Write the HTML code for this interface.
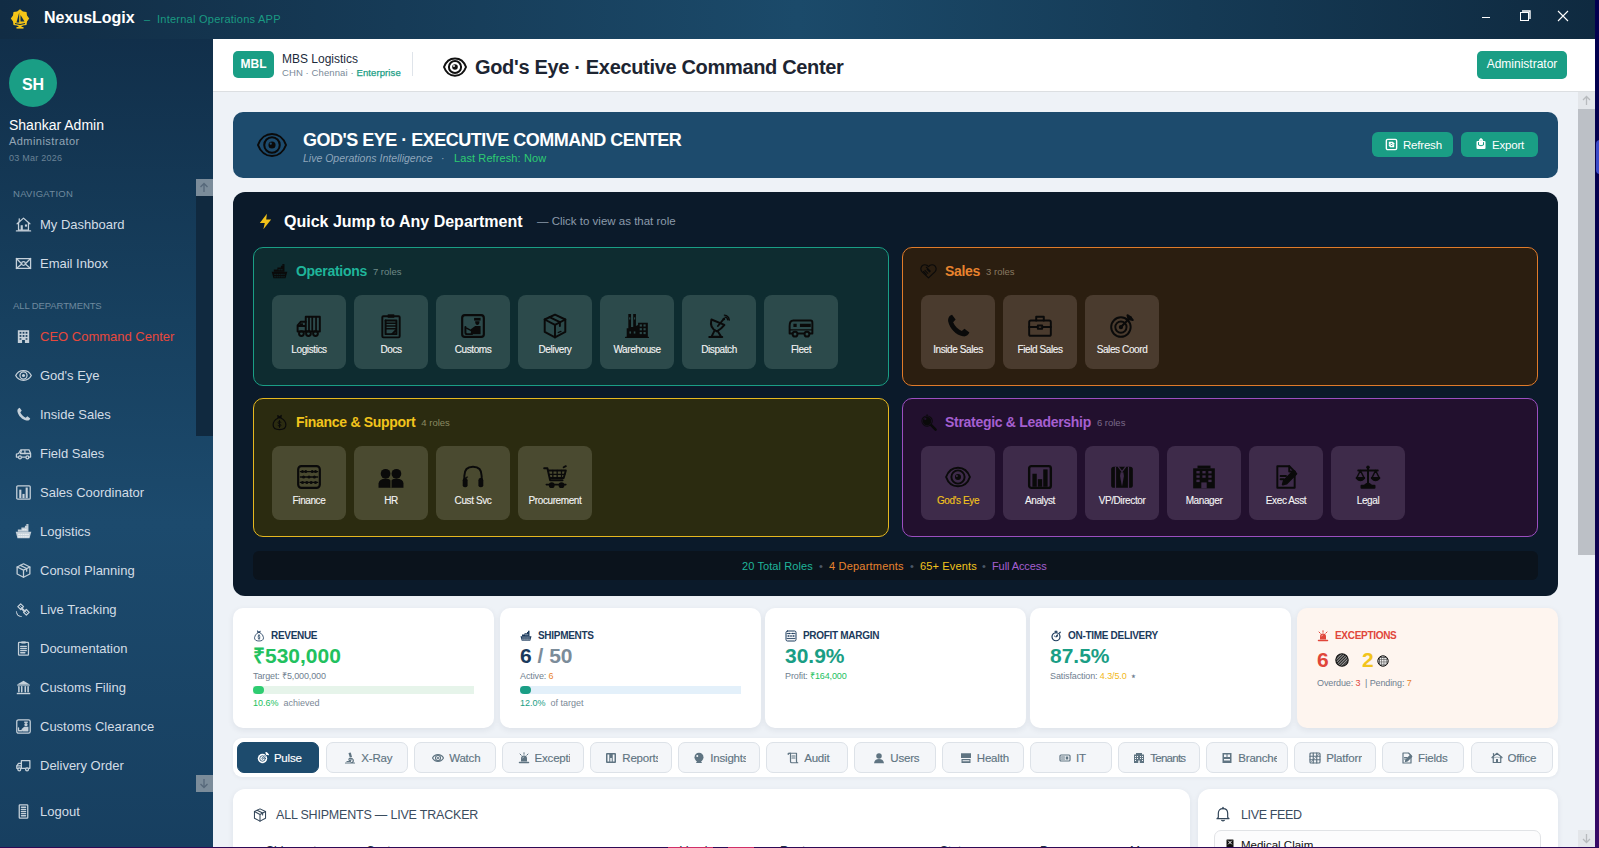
<!DOCTYPE html><html><head><meta charset="utf-8"><style>
*{box-sizing:border-box;margin:0;padding:0}
html,body{width:1599px;height:848px;overflow:hidden;background:#1a0a4a;font-family:"Liberation Sans",sans-serif}
.a{position:absolute}
#titlebar{position:absolute;z-index:5;left:0;top:0;width:1595px;height:39px;background:linear-gradient(90deg,#112c44 0%,#1b4a6a 50%,#0f2a40 100%)}
#sidebar{position:absolute;z-index:4;left:0;top:38px;width:213px;height:809px;background:linear-gradient(180deg,#112f4a 0%,#17405f 35%,#1c4a6d 60%,#173f60 100%);overflow:hidden}
#main{position:absolute;left:212px;top:38px;width:1383px;height:809px;background:#eef2f7;overflow:hidden}
#header{position:absolute;left:0;top:0;width:1383px;height:54px;background:#fff;border-bottom:1px solid #dcdfe2}
.nav{position:absolute;left:40px;font-size:13px;color:#dfe8f0;line-height:18px;white-space:nowrap}
.navi{position:absolute;left:15px}
.sect{position:absolute;left:13px;font-size:9.5px;color:#6f8a9e;letter-spacing:-0.1px;line-height:12px}
.kpi{height:120px;border-radius:10px;background:#fff;box-shadow:0 2px 6px rgba(20,40,60,0.08)}
.klab{position:absolute;left:20px;top:21px;font-size:10px;font-weight:bold;color:#1b3a5c;line-height:13px;white-space:nowrap}
.kic{position:absolute;left:0;top:1px}
.klab .t{margin-left:18px;letter-spacing:-0.3px}
.kval{position:absolute;left:20px;top:36px;font-size:21px;font-weight:bold;line-height:24px;white-space:nowrap}
.ksub{position:absolute;left:20px;top:63px;font-size:9px;letter-spacing:-0.12px;color:#6f8090;line-height:11px;white-space:nowrap}
.tab{width:81.5px;height:30.5px;border-radius:7px;border:1px solid #dde2e8;background:#f4f6f9;color:#5f7482;font-size:11.5px;letter-spacing:-0.2px;line-height:30.5px;-webkit-text-stroke:0.15px currentColor;white-space:nowrap;overflow:hidden}
.tab.act{background:#1d4b6d;border-color:#1d4b6d;color:#fff}
.tab .tic{position:absolute;top:8.5px}
.tab .tn{position:absolute;top:0;overflow:hidden}
.dot1,.dot2{position:absolute;width:13px;height:13px;border-radius:50%;border:1px solid #222;background:#666}
.dot2{background:#ddd;width:12px;height:12px}
.grp{position:absolute;width:636px;height:139px;border-radius:10px;border:1px solid}
.tile{position:absolute;top:47px;width:74px;height:74px;border-radius:8px}
.tile .ti{position:absolute;left:24px;top:18px}
.tile .tl{position:absolute;left:0;top:49px;width:74px;text-align:center;font-size:10px;letter-spacing:-0.4px;line-height:12px;white-space:nowrap;-webkit-text-stroke:0.12px currentColor}
</style></head><body>
<div id="titlebar">
<svg class="a" style="left:10px;top:9px" width="20" height="20" viewBox="0 0 20 20"><polygon points="19.20,9.50 17.02,12.41 16.51,16.01 12.91,16.52 10.00,18.70 7.09,16.52 3.49,16.01 2.98,12.41 0.80,9.50 2.98,6.59 3.49,2.99 7.09,2.48 10.00,0.30 12.91,2.48 16.51,2.99 17.02,6.59" fill="#f5c518"/><path d="M9.2 3.5 L6.5 13.5 L9.2 13.5 Z" fill="#12304a"/><path d="M10.5 6 L14.5 12.5 L10.5 12.5 Z" fill="#12304a"/><path d="M5 14.5 Q10 16.5 15 14.5" stroke="#12304a" stroke-width="1" fill="none"/><rect x="6.5" y="18" width="7" height="1.6" fill="#f5c518"/><rect x="9.3" y="16" width="1.4" height="2.5" fill="#f5c518"/></svg>
<div class="a" style="left:44px;top:9px;font-size:16px;font-weight:bold;color:#fff;line-height:18px">NexusLogix</div>
<div class="a" style="left:144px;top:12px;font-size:11px;letter-spacing:0.25px;color:#1a9a82;line-height:14px;white-space:nowrap">–&nbsp; Internal Operations APP</div>
<div class="a" style="left:1482px;top:17px;width:8px;height:1px;background:#fff"></div>
<svg class="a" style="left:1519px;top:10px" width="12" height="12" viewBox="0 0 12 12"><rect x="1.5" y="2.5" width="8" height="8" fill="none" stroke="#fff" stroke-width="1"/><path d="M3 1 H11 V9" fill="none" stroke="#fff" stroke-width="1.4"/></svg>
<svg class="a" style="left:1557px;top:10px" width="12" height="12" viewBox="0 0 12 12"><path d="M1 1L11 11M11 1L1 11" stroke="#fff" stroke-width="1.1"/></svg>
</div>
<div id="sidebar">
<div class="a" style="left:9px;top:21px;width:48px;height:48px;border-radius:50%;background:#1a9e85;color:#fff;font-weight:bold;font-size:16px;line-height:52px;text-align:center">SH</div>
<div class="a" style="left:9px;top:79px;font-size:14px;color:#fff;line-height:16px;white-space:nowrap">Shankar Admin</div>
<div class="a" style="left:9px;top:97px;font-size:11px;letter-spacing:0.45px;color:#93a6b6;line-height:13px;white-space:nowrap">Administrator</div>
<div class="a" style="left:9px;top:115px;font-size:9px;letter-spacing:0.25px;color:#6a8296;line-height:11px;white-space:nowrap">03 Mar 2026</div>
<div class="a" style="left:196px;top:141px;width:17px;height:17px;background:#7b8c9a"><svg width="16" height="17" viewBox="0 0 16 17" style="display:block"><path d="M8 4.5 V13 M4.5 8 L8 4.5 L11.5 8" stroke="#56687a" stroke-width="1.3" fill="none"/></svg></div>
<div class="a" style="left:196px;top:158px;width:17px;height:240px;background:#10293f"></div>
<div class="a" style="left:196px;top:737px;width:17px;height:17px;background:#7b8c9a"><svg width="16" height="17" viewBox="0 0 16 17" style="display:block"><path d="M8 4 V12.5 M4.5 9 L8 12.5 L11.5 9" stroke="#56687a" stroke-width="1.3" fill="none"/></svg></div>
<div class="sect" style="top:150px;letter-spacing:0.3px">NAVIGATION</div>
<div class="sect" style="top:262px">ALL DEPARTMENTS</div>
<div class="navi" style="top:178px"><svg width="17" height="17" viewBox="0 0 24 24" style="display:block;" fill="none" stroke="#c5d0d9" stroke-width="1.8" stroke-linejoin="round" stroke-linecap="round"><path d="M3 11 L12 3 L21 11"/><path d="M5 9.5 V20 H19 V9.5"/><path d="M2 21 H22"/><rect x="8" y="13" width="3" height="7" fill="#c5d0d9" stroke="none"/><rect x="14" y="12" width="3" height="3" fill="#c5d0d9" stroke="none"/><path d="M6 4 V8"/></svg></div>
<div class="nav" style="top:178px;color:#d3dde6">My Dashboard</div>
<div class="navi" style="top:217px"><svg width="17" height="17" viewBox="0 0 24 24" style="display:block;" fill="none" stroke="#c5d0d9" stroke-width="1.8" stroke-linejoin="round" stroke-linecap="round"><rect x="2" y="5" width="20" height="14"/><path d="M2 5 L9 12 M22 5 L15 12 M2 19 L9 13 M22 19 L15 13"/><circle cx="12" cy="12" r="2.6"/></svg></div>
<div class="nav" style="top:217px;color:#d3dde6">Email Inbox</div>
<div class="navi" style="top:290px"><svg width="17" height="17" viewBox="0 0 24 24" style="display:block;" fill="none" stroke="#c5d0d9" stroke-width="1.8" stroke-linejoin="round" stroke-linecap="round"><path d="M4 3 H20 V21 H14 V17 H10 V21 H4 Z" fill="#c5d0d9" stroke="none"/><g fill="#1a3e5e" stroke="none"><rect x="6.5" y="5.5" width="2.5" height="2.5"/><rect x="10.8" y="5.5" width="2.5" height="2.5"/><rect x="15" y="5.5" width="2.5" height="2.5"/><rect x="6.5" y="10" width="2.5" height="2.5"/><rect x="10.8" y="10" width="2.5" height="2.5"/><rect x="15" y="10" width="2.5" height="2.5"/><rect x="6.5" y="14.5" width="2.5" height="2"/><rect x="15" y="14.5" width="2.5" height="2"/></g></svg></div>
<div class="nav" style="top:290px;color:#e8483c">CEO Command Center</div>
<div class="navi" style="top:329px"><svg width="17" height="17" viewBox="0 0 24 24" style="display:block;" fill="none" stroke="#c5d0d9" stroke-width="1.8" stroke-linejoin="round" stroke-linecap="round"><path d="M1 12 C5.5 3, 18.5 3, 23 12 C18.5 21, 5.5 21, 1 12 Z"/><circle cx="12" cy="12" r="5"/><circle cx="12" cy="12" r="2.2" fill="#c5d0d9" stroke="none"/></svg></div>
<div class="nav" style="top:329px;color:#d3dde6">God's Eye</div>
<div class="navi" style="top:368px"><svg width="17" height="17" viewBox="0 0 24 24" style="display:block;" fill="none" stroke="#c5d0d9" stroke-width="1.8" stroke-linejoin="round" stroke-linecap="round"><path d="M6.5 2.5 C4 3.5 3 5.5 3.5 8 C5 14 10 19 16 20.5 C18.5 21 20.5 20 21.5 17.5 L17.5 14.5 L15 16.5 C12 15 9 12 7.5 9 L9.5 6.5 Z" fill="#c5d0d9" stroke="none"/></svg></div>
<div class="nav" style="top:368px;color:#d3dde6">Inside Sales</div>
<div class="navi" style="top:407px"><svg width="17" height="17" viewBox="0 0 24 24" style="display:block;" fill="none" stroke="#c5d0d9" stroke-width="1.8" stroke-linejoin="round" stroke-linecap="round"><path d="M2 17 V13 L5 12 L8 7 H20 L22 12 V17 Z"/><path d="M9 8 L7.5 12 H21"/><path d="M14 8 V12"/><circle cx="7" cy="17.5" r="2" fill="#1a4465"/><circle cx="17.5" cy="17.5" r="2" fill="#1a4465"/></svg></div>
<div class="nav" style="top:407px;color:#d3dde6">Field Sales</div>
<div class="navi" style="top:446px"><svg width="17" height="17" viewBox="0 0 24 24" style="display:block;" fill="none" stroke="#c5d0d9" stroke-width="1.8" stroke-linejoin="round" stroke-linecap="round"><rect x="2.5" y="2.5" width="19" height="19" rx="1.5"/><rect x="6" y="8" width="3" height="12" fill="#c5d0d9" stroke="none"/><rect x="10.5" y="14" width="3" height="6" fill="#c5d0d9" stroke="none"/><rect x="15" y="5" width="3" height="15" fill="#c5d0d9" stroke="none"/></svg></div>
<div class="nav" style="top:446px;color:#d3dde6">Sales Coordinator</div>
<div class="navi" style="top:485px"><svg width="17" height="17" viewBox="0 0 24 24" style="display:block;" fill="none" stroke="#c5d0d9" stroke-width="1.8" stroke-linejoin="round" stroke-linecap="round"><path d="M1 12.5 H23 L20.5 21.5 H3.5 Z" fill="#c5d0d9" stroke="none"/><path d="M4 12.5 V9 H9 V6.5 H14 V4 H19 V12.5 Z" fill="#c5d0d9" stroke="none"/><path d="M16 1.5 H19 V4 H16 Z" fill="#c5d0d9" stroke="none"/><g stroke="#fff" stroke-width="1.1" stroke-dasharray="1.6 1.6"><path d="M5 16 H19"/><path d="M5 19.5 H19"/><path d="M11 9.5 H17"/></g></svg></div>
<div class="nav" style="top:485px;color:#d3dde6">Logistics</div>
<div class="navi" style="top:524px"><svg width="17" height="17" viewBox="0 0 24 24" style="display:block;" fill="none" stroke="#c5d0d9" stroke-width="1.8" stroke-linejoin="round" stroke-linecap="round"><path d="M12 2.5 L21 7 V17 L12 21.5 L3 17 V7 Z"/><path d="M3 7 L12 11.5 L21 7 M12 11.5 V21.5"/><path d="M7.5 4.8 L16.5 9.2 V13"/></svg></div>
<div class="nav" style="top:524px;color:#d3dde6">Consol Planning</div>
<div class="navi" style="top:563px"><svg width="17" height="17" viewBox="0 0 24 24" style="display:block;" fill="none" stroke="#c5d0d9" stroke-width="1.8" stroke-linejoin="round" stroke-linecap="round"><path d="M8 4 L12 8 L8 12 L4 8 Z"/><path d="M16 12 L20 16 L16 20 L12 16 Z"/><path d="M9.5 10.5 L13.5 14.5" stroke-width="3"/><path d="M6 6 L10 10 M14 14 L18 18" stroke-width="1"/><path d="M3 18 Q3 21 6 21 M2 15 Q2 22 9 22" stroke-width="1.2"/></svg></div>
<div class="nav" style="top:563px;color:#d3dde6">Live Tracking</div>
<div class="navi" style="top:602px"><svg width="17" height="17" viewBox="0 0 24 24" style="display:block;" fill="none" stroke="#c5d0d9" stroke-width="1.8" stroke-linejoin="round" stroke-linecap="round"><rect x="5" y="3.5" width="14" height="18" rx="1"/><rect x="9" y="2" width="6" height="3" fill="#c5d0d9" stroke="none"/><path d="M8 9 H16 M8 12 H16 M8 15 H16 M8 18 H14"/></svg></div>
<div class="nav" style="top:602px;color:#d3dde6">Documentation</div>
<div class="navi" style="top:641px"><svg width="17" height="17" viewBox="0 0 24 24" style="display:block;" fill="none" stroke="#c5d0d9" stroke-width="1.8" stroke-linejoin="round" stroke-linecap="round"><path d="M2.5 8 L12 2.5 L21.5 8 Z" fill="#c5d0d9" stroke="none"/><path d="M3 9 H21 V10 H3 Z" fill="#c5d0d9" stroke="none"/><path d="M5.5 11 V18 M9.5 11 V18 M14.5 11 V18 M18.5 11 V18" stroke-width="2.2"/><path d="M2.5 19.5 H21.5 V21.5 H2.5 Z" fill="#c5d0d9" stroke="none"/></svg></div>
<div class="nav" style="top:641px;color:#d3dde6">Customs Filing</div>
<div class="navi" style="top:680px"><svg width="17" height="17" viewBox="0 0 24 24" style="display:block;" fill="none" stroke="#c5d0d9" stroke-width="1.8" stroke-linejoin="round" stroke-linecap="round"><rect x="2.5" y="2.5" width="19" height="19" rx="2.5"/><path d="M13 5 H18 V7 H13 Z" fill="#c5d0d9" stroke="none"/><circle cx="15.5" cy="9.5" r="2.3" fill="#c5d0d9" stroke="none"/><path d="M9 16 L13 12.5 H19 V19 H11 Z" fill="#c5d0d9" stroke="none"/><path d="M5 14 V18 H10" /></svg></div>
<div class="nav" style="top:680px;color:#d3dde6">Customs Clearance</div>
<div class="navi" style="top:719px"><svg width="17" height="17" viewBox="0 0 24 24" style="display:block;" fill="none" stroke="#c5d0d9" stroke-width="1.8" stroke-linejoin="round" stroke-linecap="round"><path d="M9 5 H21 V16 H9 Z"/><path d="M9 9 H5 L2.5 12.5 V16 H9"/><path d="M3 12.5 H8"/><circle cx="6" cy="17.5" r="2" fill="#1a4465"/><circle cx="17" cy="17.5" r="2" fill="#1a4465"/></svg></div>
<div class="nav" style="top:719px;color:#d3dde6">Delivery Order</div>
<div class="navi" style="top:765px"><svg width="17" height="17" viewBox="0 0 24 24" style="display:block;" fill="none" stroke="#c5d0d9" stroke-width="1.8" stroke-linejoin="round" stroke-linecap="round"><rect x="6" y="2.5" width="12" height="19" rx="1"/><path d="M9 6 H15 M9 9 H15 M9 12 H15 M9 15 H15 M9 18 H15"/></svg></div>
<div class="nav" style="top:765px;color:#d3dde6">Logout</div>
</div>
<div id="main">
<div id="header">
<div class="a" style="left:21px;top:13px;width:41px;height:27px;border-radius:5px;background:#1a9e85;color:#fff;font-weight:bold;font-size:12px;line-height:27px;text-align:center">MBL</div>
<div class="a" style="left:70px;top:14px;font-size:12px;color:#1b2b3b;line-height:14px;white-space:nowrap">MBS Logistics</div>
<div class="a" style="left:70px;top:29px;font-size:9.5px;letter-spacing:0.1px;color:#7a8a99;line-height:11px;white-space:nowrap">CHN · Chennai · <span style="color:#1a9e85;-webkit-text-stroke:0.25px #1a9e85">Enterprise</span></div>
<div class="a" style="left:200px;top:14px;width:1px;height:24px;background:#dfe4ea"></div>
<div class="a" style="left:231px;top:19px"><svg width="24" height="20" viewBox="0 2 24 20" style="display:block;" fill="none" stroke="#111" stroke-width="2" stroke-linejoin="round" stroke-linecap="round"><path d="M1 12 C5 0.5, 19 0.5, 23 12 C19 23.5, 5 23.5, 1 12 Z"/><circle cx="12" cy="12" r="6.1"/><circle cx="12" cy="12" r="2.8" fill="#111" stroke="none"/><circle cx="11" cy="11" r="0.9" fill="#fff" stroke="none"/></svg></div>
<div class="a" style="left:263px;top:17px;font-size:20px;letter-spacing:-0.33px;font-weight:bold;color:#1d2532;line-height:24px;white-space:nowrap">God's Eye · Executive Command Center</div>
<div class="a" style="left:1265px;top:13px;width:90px;height:28px;border-radius:5px;background:#1a9e85;color:#fff;font-size:12px;line-height:27px;text-align:center">Administrator</div>
</div>
<div class="a" style="left:21px;top:74px;width:1325px;height:66px;border-radius:10px;background:#1d4b6d">
<div class="a" style="left:23px;top:19px"><svg width="32" height="28" viewBox="0 1 24 22" style="display:block;" fill="none" stroke="#0a0a0a" stroke-width="1.6" stroke-linejoin="round" stroke-linecap="round"><path d="M1 12 C5 0.5, 19 0.5, 23 12 C19 23.5, 5 23.5, 1 12 Z"/><circle cx="12" cy="12" r="6.1"/><circle cx="12" cy="12" r="2.8" fill="#0a0a0a" stroke="none"/><circle cx="11" cy="11" r="0.9" fill="#1d4b6d" stroke="none"/></svg></div>
<div class="a" style="left:70px;top:17px;font-size:18px;letter-spacing:-0.5px;font-weight:bold;color:#fff;line-height:22px;white-space:nowrap">GOD'S EYE · EXECUTIVE COMMAND CENTER</div>
<div class="a" style="left:70px;top:40px;font-size:10.5px;color:#8fa6bb;line-height:13px;white-space:nowrap"><i>Live Operations Intelligence</i></div>
<div class="a" style="left:208px;top:40px;font-size:10.5px;color:#8fa6bb;line-height:13px">·</div>
<div class="a" style="left:221px;top:40px;font-size:11px;letter-spacing:0.1px;color:#2ecc71;line-height:13px;white-space:nowrap">Last Refresh: Now</div>
<div class="a" style="left:1139px;top:20px;width:81px;height:25px;border-radius:6px;background:#1a9e85;color:#fff;font-size:11.5px;letter-spacing:-0.2px;line-height:27px;white-space:nowrap"><span class="a" style="left:13px;top:6px"><svg width="13" height="13" viewBox="0 0 24 24" style="display:block;" fill="none" stroke="#fff" stroke-width="1.8" stroke-linejoin="round" stroke-linecap="round"><rect x="2.5" y="2.5" width="19" height="19" rx="2.5" stroke-width="2.6"/><path d="M7 7 H14.5 L17 9.5 V17 H9.5 L7 14.5 Z" fill="#fff" stroke="none"/><path d="M9.5 11.5 Q10.5 9.5 12.5 9.8 M14.5 12.5 Q13.5 14.5 11.5 14.2" stroke="#1a9e85" stroke-width="1.6"/></svg></span><span class="a" style="left:31px">Refresh</span></div>
<div class="a" style="left:1228px;top:20px;width:77px;height:25px;border-radius:6px;background:#1a9e85;color:#fff;font-size:11.5px;letter-spacing:-0.2px;line-height:27px;white-space:nowrap"><span class="a" style="left:14px;top:6px"><svg width="12" height="12" viewBox="0 0 24 24" style="display:block;" fill="none" stroke="#fff" stroke-width="1.8" stroke-linejoin="round" stroke-linecap="round"><path d="M3 8 Q3 6 5 6 H19 Q21 6 21 8 V20 Q21 22 19 22 H5 Q3 22 3 20 Z" fill="#fff" stroke="none"/><path d="M7 9 V14 Q12 17 17 14 V9" stroke="#1a9e85" stroke-width="2"/><path d="M12 1.5 V11 M9 4.5 L12 1.5 L15 4.5" stroke-width="2.4"/></svg></span><span class="a" style="left:31px">Export</span></div>
</div>
<div class="a" style="left:21px;top:154px;width:1325px;height:404px;border-radius:12px;background:#0b1a2a">
<div class="a" style="left:24px;top:20px"><svg width="17" height="19" viewBox="0 0 24 24" style="display:block;" fill="none" stroke="#f2c21a" stroke-width="1.8" stroke-linejoin="round" stroke-linecap="round"><path d="M14 1 L4 14 H11 L9 23 L20 9 H13 Z" fill="#f2c21a" stroke="none"/></svg></div>
<div class="a" style="left:51px;top:20px;font-size:16px;font-weight:bold;color:#fff;line-height:19px;white-space:nowrap">Quick Jump to Any Department</div>
<div class="a" style="left:304px;top:22px;font-size:11.5px;color:#8b9aab;line-height:14px;white-space:nowrap">— Click to view as that role</div>
<div class="grp" style="left:20px;top:55px;border-color:#1a9e85;background:#0e2c30"><div class="a" style="left:17px;top:15px"><svg width="17" height="17" viewBox="0 0 24 24" style="display:block;" fill="none" stroke="#0a0a0a" stroke-width="1.8" stroke-linejoin="round" stroke-linecap="round"><path d="M1 12.5 H23 L20.5 21.5 H3.5 Z" fill="#0a0a0a" stroke="none"/><path d="M4 12.5 V9 H9 V6.5 H14 V4 H19 V12.5 Z" fill="#0a0a0a" stroke="none"/><path d="M16 1.5 H19 V4 H16 Z" fill="#0a0a0a" stroke="none"/><g stroke="#0e2c30" stroke-width="1.1" stroke-dasharray="1.6 1.6"><path d="M5 16 H19"/><path d="M5 19.5 H19"/><path d="M11 9.5 H17"/></g></svg></div><div class="a" style="left:42px;top:15px;font-size:14px;letter-spacing:-0.3px;font-weight:bold;color:#1fb59a;line-height:17px;white-space:nowrap">Operations<span style="font-size:9.5px;letter-spacing:0;font-weight:normal;color:#6e8a87;vertical-align:1px;margin-left:6px">7 roles</span></div><div class="tile" style="left:18px;background:#2c4a4b"><div class="ti"><svg width="26" height="26" viewBox="0 0 24 24" style="display:block;" fill="none" stroke="#0a0a0a" stroke-width="1.8" stroke-linejoin="round" stroke-linecap="round"><path d="M9 3.5 H22 V17 H9 Z"/><path d="M12 4 V16.5 M15 4 V16.5 M18.5 4 V16.5" stroke-width="1.6"/><path d="M9 8 H4.5 L1.5 11.5 V17 H9"/><path d="M2 12 H8" /><rect x="3.5" y="9.5" width="3" height="2" fill="#0a0a0a" stroke="none"/><circle cx="5" cy="19" r="2.2"/><circle cx="11.5" cy="19" r="2.2"/><circle cx="18" cy="19" r="2.2"/></svg></div><div class="tl" style="color:#f4f4f4">Logistics</div></div><div class="tile" style="left:100px;background:#2c4a4b"><div class="ti"><svg width="26" height="26" viewBox="0 0 24 24" style="display:block;" fill="none" stroke="#0a0a0a" stroke-width="1.8" stroke-linejoin="round" stroke-linecap="round"><rect x="4" y="3" width="16" height="19.5" rx="1"/><rect x="9" y="1.2" width="6" height="3.2" fill="#0a0a0a" stroke="none"/><path d="M7 7 H17 V19.5 H13 L17 15.5" /><path d="M7.5 9.5 H16.5 M7.5 12 H16.5 M7.5 14.5 H16.5" stroke-width="1.4"/><path d="M7 7 V19.5 H13" /></svg></div><div class="tl" style="color:#f4f4f4">Docs</div></div><div class="tile" style="left:182px;background:#2c4a4b"><div class="ti"><svg width="26" height="26" viewBox="0 0 24 24" style="display:block;" fill="none" stroke="#0a0a0a" stroke-width="1.8" stroke-linejoin="round" stroke-linecap="round"><rect x="2" y="2" width="20" height="20" rx="2.5" stroke-width="2"/><path d="M13 4.5 H19 V7 H13 Z" fill="#0a0a0a" stroke="none"/><path d="M14 7.5 Q14 11 16 11 Q18 11 18 7.5 Z" fill="#0a0a0a" stroke="none"/><path d="M10 15 L14 12 H19 V19.5 H10 Z" fill="#0a0a0a" stroke="none"/><path d="M5 13 V18 Q5 19.5 6.5 19.5 H11"/><path d="M6 14 L10 16" stroke-width="1.4"/></svg></div><div class="tl" style="color:#f4f4f4">Customs</div></div><div class="tile" style="left:264px;background:#2c4a4b"><div class="ti"><svg width="26" height="26" viewBox="0 0 24 24" style="display:block;" fill="none" stroke="#0a0a0a" stroke-width="1.8" stroke-linejoin="round" stroke-linecap="round"><path d="M12 1.5 L21.5 6 V17.5 L12 22.5 L2.5 17.5 V6 Z"/><path d="M2.5 6 L12 11 L21.5 6 M12 11 V22.5"/><path d="M7 3.8 L16.5 8.5 V12"/><path d="M15 18 L17.5 17" stroke-width="1.2"/></svg></div><div class="tl" style="color:#f4f4f4">Delivery</div></div><div class="tile" style="left:346px;background:#2c4a4b"><div class="ti"><svg width="26" height="26" viewBox="0 0 24 24" style="display:block;" fill="none" stroke="#0a0a0a" stroke-width="1.8" stroke-linejoin="round" stroke-linecap="round"><path d="M2.5 22.5 V14 H4 V1 H6.5 V13 H8.5 V1 H11 V12 L13 11 V9 H22 V22.5 Z" fill="#0a0a0a" stroke="none"/><path d="M1.5 22.5 H22.5" stroke-width="1.2"/><g fill="#2c4a4b" stroke="none"><rect x="4.8" y="4" width="1" height="2"/><rect x="9.3" y="4" width="1" height="2"/><rect x="14.5" y="10.5" width="2" height="2"/><rect x="18" y="10.5" width="2" height="2"/><rect x="14.5" y="14" width="2" height="2"/><rect x="18" y="14" width="2" height="2"/><rect x="14.5" y="17.5" width="2" height="2"/><rect x="18" y="17.5" width="2" height="2"/><rect x="5" y="17" width="1.5" height="2"/><rect x="9" y="17" width="1.5" height="2"/></g></svg></div><div class="tl" style="color:#f4f4f4">Warehouse</div></div><div class="tile" style="left:428px;background:#2c4a4b"><div class="ti"><svg width="26" height="26" viewBox="0 0 24 24" style="display:block;" fill="none" stroke="#0a0a0a" stroke-width="1.8" stroke-linejoin="round" stroke-linecap="round"><path d="M5 6 Q3 14 10 17 Q14 15 17 11 Z" /><path d="M11 12 L16 6" /><circle cx="16.5" cy="5.5" r="1.2" fill="#0a0a0a" stroke="none"/><path d="M17 2 Q21 2.5 21.5 6.5 M17.5 3.8 Q19.8 4 20 6.2" stroke-width="1.3"/><path d="M8 16 L5 22 H14 L11 17"/><path d="M3 22.2 H15"/></svg></div><div class="tl" style="color:#f4f4f4">Dispatch</div></div><div class="tile" style="left:510px;background:#2c4a4b"><div class="ti"><svg width="26" height="26" viewBox="0 0 24 24" style="display:block;" fill="none" stroke="#0a0a0a" stroke-width="1.8" stroke-linejoin="round" stroke-linecap="round"><path d="M1.5 19 V12 Q1.5 7 5 7 H21 Q22.5 7 22.5 9 V19 Z"/><path d="M5 10 H8 V13 H5 Z M11 10 H21 V13 H11 Z" fill="#0a0a0a" stroke="none"/><path d="M1.5 15.5 H22.5" stroke-width="1.2"/><circle cx="6.5" cy="19.5" r="2.2" fill="#2c4a4b"/><circle cx="17.5" cy="19.5" r="2.2" fill="#2c4a4b"/></svg></div><div class="tl" style="color:#f4f4f4">Fleet</div></div></div>
<div class="grp" style="left:669px;top:55px;border-color:#e07b2a;background:#2b1e10"><div class="a" style="left:17px;top:15px"><svg width="17" height="17" viewBox="0 0 24 24" style="display:block;" fill="none" stroke="#0a0a0a" stroke-width="1.8" stroke-linejoin="round" stroke-linecap="round"><path d="M12 21 L3 12.5 Q0.5 10 1.5 6.5 Q3 2.5 7 2.5 Q10 2.5 12 5 Q14 2.5 17 2.5 Q21 2.5 22.5 6.5 Q23.5 10 21 12.5 Z" stroke-width="1.6"/><path d="M9 6 L14.5 11.5 M5 12 L9 16 M7 10.5 L11 14.5 M10 9 L13.5 12.5" stroke-width="1.5"/></svg></div><div class="a" style="left:42px;top:15px;font-size:14px;letter-spacing:-0.3px;font-weight:bold;color:#e8832e;line-height:17px;white-space:nowrap">Sales<span style="font-size:9.5px;letter-spacing:0;font-weight:normal;color:#8a7a62;vertical-align:1px;margin-left:6px">3 roles</span></div><div class="tile" style="left:18px;background:#4a3b2e"><div class="ti"><svg width="26" height="26" viewBox="0 0 24 24" style="display:block;" fill="none" stroke="#0a0a0a" stroke-width="1.8" stroke-linejoin="round" stroke-linecap="round"><path d="M6.5 1.5 C3.5 2.5 2.5 5 3 8 C4.5 14.5 10 20 16.5 21.5 C19.5 22 21.5 20.5 22.5 18 L18 14.5 L15.5 16.5 C12 15 9 12 7.5 8.5 L9.8 6 Z" fill="#0a0a0a" stroke="none"/></svg></div><div class="tl" style="color:#f4f4f4">Inside Sales</div></div><div class="tile" style="left:100px;background:#4a3b2e"><div class="ti"><svg width="26" height="26" viewBox="0 0 24 24" style="display:block;" fill="none" stroke="#0a0a0a" stroke-width="1.8" stroke-linejoin="round" stroke-linecap="round"><rect x="2" y="7" width="20" height="14" rx="1.5"/><path d="M8.5 7 V3.5 H15.5 V7"/><path d="M2 13 H22"/><rect x="10" y="11.5" width="4" height="3" fill="#4a3b2e"/></svg></div><div class="tl" style="color:#f4f4f4">Field Sales</div></div><div class="tile" style="left:182px;background:#4a3b2e"><div class="ti"><svg width="26" height="26" viewBox="0 0 24 24" style="display:block;" fill="none" stroke="#0a0a0a" stroke-width="1.8" stroke-linejoin="round" stroke-linecap="round"><circle cx="11" cy="13" r="9"/><circle cx="11" cy="13" r="5.2"/><circle cx="11" cy="13" r="2" fill="#0a0a0a" stroke="none"/><path d="M11 13 L20 4" stroke-width="2"/><path d="M17 2 L18 5.5 L22 6.5 L20 4 Z" fill="#0a0a0a"/></svg></div><div class="tl" style="color:#f4f4f4">Sales Coord</div></div></div>
<div class="grp" style="left:20px;top:206px;border-color:#e6b820;background:#2b2b10"><div class="a" style="left:17px;top:15px"><svg width="17" height="17" viewBox="0 0 24 24" style="display:block;" fill="none" stroke="#0a0a0a" stroke-width="1.8" stroke-linejoin="round" stroke-linecap="round"><path d="M9.5 2 L12 4 L14.5 2 L14 5 H10 Z" stroke-width="1.5"/><path d="M10 5.5 Q3 9 3 15.5 Q3 22 12 22 Q21 22 21 15.5 Q21 9 14 5.5 Z" stroke-width="1.6"/><path d="M14 12 Q13.5 10.5 12 10.5 Q10 10.5 10 12.2 Q10 13.7 12 14 Q14 14.3 14 16 Q14 17.5 12 17.5 Q10.5 17.5 10 16 M12 9 V19" stroke-width="1.3"/></svg></div><div class="a" style="left:42px;top:15px;font-size:14px;letter-spacing:-0.3px;font-weight:bold;color:#f2c41c;line-height:17px;white-space:nowrap">Finance &amp; Support<span style="font-size:9.5px;letter-spacing:0;font-weight:normal;color:#8a8a62;vertical-align:1px;margin-left:6px">4 roles</span></div><div class="tile" style="left:18px;background:#4a4a30"><div class="ti"><svg width="26" height="26" viewBox="0 0 24 24" style="display:block;" fill="none" stroke="#0a0a0a" stroke-width="1.8" stroke-linejoin="round" stroke-linecap="round"><rect x="2" y="2" width="20" height="20" rx="3" stroke-width="2"/><path d="M4 7 H20 M4 12 H20 M4 17 H20" stroke-width="1.2"/><g fill="#0a0a0a" stroke="none"><circle cx="6" cy="7" r="1.4"/><circle cx="9" cy="7" r="1.4"/><circle cx="15" cy="7" r="1.4"/><circle cx="18" cy="7" r="1.4"/><circle cx="7" cy="12" r="1.4"/><circle cx="12" cy="12" r="1.4"/><circle cx="17" cy="12" r="1.4"/><circle cx="6" cy="17" r="1.4"/><circle cx="10" cy="17" r="1.4"/><circle cx="14" cy="17" r="1.4"/><circle cx="18" cy="17" r="1.4"/></g></svg></div><div class="tl" style="color:#f4f4f4">Finance</div></div><div class="tile" style="left:100px;background:#4a4a30"><div class="ti"><svg width="26" height="26" viewBox="0 0 24 24" style="display:block;" fill="none" stroke="#0a0a0a" stroke-width="1.8" stroke-linejoin="round" stroke-linecap="round"><g fill="#0a0a0a" stroke="none"><circle cx="7" cy="9" r="4.5"/><circle cx="17" cy="9" r="4.5"/><path d="M0.5 22 V18 Q1 13.5 7 13.5 Q13 13.5 13 18 V22 Z"/><path d="M11 22 V18 Q11 13.5 17 13.5 Q23.5 13.5 23.5 18 V22 Z"/></g><path d="M12 13 V22" stroke="#4a4a30" stroke-width="1"/></svg></div><div class="tl" style="color:#f4f4f4">HR</div></div><div class="tile" style="left:182px;background:#4a4a30"><div class="ti"><svg width="26" height="26" viewBox="0 0 24 24" style="display:block;" fill="none" stroke="#0a0a0a" stroke-width="1.8" stroke-linejoin="round" stroke-linecap="round"><path d="M4 16 V11 Q4 2.5 12 2.5 Q20 2.5 20 11 V16"/><rect x="2.5" y="13" width="4.5" height="8.5" rx="2" fill="#0a0a0a" stroke="none"/><rect x="17" y="13" width="4.5" height="8.5" rx="2" fill="#0a0a0a" stroke="none"/><path d="M5 14 Q5 12 7 12" stroke-width="1"/></svg></div><div class="tl" style="color:#f4f4f4">Cust Svc</div></div><div class="tile" style="left:264px;background:#4a4a30"><div class="ti"><svg width="26" height="26" viewBox="0 0 24 24" style="display:block;" fill="none" stroke="#0a0a0a" stroke-width="1.8" stroke-linejoin="round" stroke-linecap="round"><path d="M2 4 H5 L7.5 15 H19" /><path d="M6 6 H22 L20 13 H7.5"/><path d="M10 6 V13 M14 6 V13 M18 6 V13 M6.5 9.5 H21" stroke-width="1.2"/><path d="M20 3 L22 2" /><circle cx="9" cy="19.5" r="1.8" fill="#0a0a0a"/><circle cx="18" cy="19.5" r="1.8" fill="#0a0a0a"/><path d="M4 19 H22" stroke-width="1.5"/></svg></div><div class="tl" style="color:#f4f4f4">Procurement</div></div></div>
<div class="grp" style="left:669px;top:206px;border-color:#9b4fc0;background:#22102e"><div class="a" style="left:17px;top:15px"><svg width="17" height="17" viewBox="0 0 24 24" style="display:block;" fill="none" stroke="#0a0a0a" stroke-width="1.8" stroke-linejoin="round" stroke-linecap="round"><circle cx="10" cy="10" r="8" fill="#0a0a0a" stroke="none"/><path d="M15.5 15.5 L22 22" stroke-width="3.5"/><circle cx="10" cy="10" r="6.5" stroke="#22102e" stroke-width="0.8"/><circle cx="7.5" cy="7" r="1.6" fill="#22102e" stroke="none"/><path d="M10 1 V2.5" stroke-width="1.5"/></svg></div><div class="a" style="left:42px;top:15px;font-size:14px;letter-spacing:-0.3px;font-weight:bold;color:#a55fd0;line-height:17px;white-space:nowrap">Strategic &amp; Leadership<span style="font-size:9.5px;letter-spacing:0;font-weight:normal;color:#7a6a8a;vertical-align:1px;margin-left:6px">6 roles</span></div><div class="tile" style="left:18px;background:#3e2b4a"><div class="ti"><svg width="26" height="26" viewBox="0 0 24 24" style="display:block;" fill="none" stroke="#0a0a0a" stroke-width="1.8" stroke-linejoin="round" stroke-linecap="round"><path d="M1 12 C5 0.5, 19 0.5, 23 12 C19 23.5, 5 23.5, 1 12 Z"/><circle cx="12" cy="12" r="6.1"/><circle cx="12" cy="12" r="2.8" fill="#0a0a0a" stroke="none"/><circle cx="11" cy="11" r="0.9" fill="#3e2b4a" stroke="none"/></svg></div><div class="tl" style="color:#f2c41c">God's Eye</div></div><div class="tile" style="left:100px;background:#3e2b4a"><div class="ti"><svg width="26" height="26" viewBox="0 0 24 24" style="display:block;" fill="none" stroke="#0a0a0a" stroke-width="1.8" stroke-linejoin="round" stroke-linecap="round"><rect x="2" y="2" width="20" height="20" rx="2" stroke-width="2.2"/><rect x="5" y="9" width="4" height="12" fill="#0a0a0a" stroke="none"/><rect x="10" y="14" width="4" height="7" fill="#0a0a0a" stroke="none"/><rect x="15" y="5" width="4" height="16" fill="#0a0a0a" stroke="none"/></svg></div><div class="tl" style="color:#f4f4f4">Analyst</div></div><div class="tile" style="left:182px;background:#3e2b4a"><div class="ti"><svg width="26" height="26" viewBox="0 0 24 24" style="display:block;" fill="none" stroke="#0a0a0a" stroke-width="1.8" stroke-linejoin="round" stroke-linecap="round"><rect x="2" y="2.5" width="20" height="19.5" rx="2.5" fill="#0a0a0a" stroke="none"/><g stroke="#3e2b4a" stroke-width="1.1"><path d="M6 3 V22 M18 3 V22"/><path d="M8.5 2.5 L12 7 L15.5 2.5"/></g><path d="M10.8 7.5 L13.2 7.5 L13.8 11 L12 21 L10.2 11 Z" fill="#3e2b4a" stroke="none"/></svg></div><div class="tl" style="color:#f4f4f4">VP/Director</div></div><div class="tile" style="left:264px;background:#3e2b4a"><div class="ti"><svg width="26" height="26" viewBox="0 0 24 24" style="display:block;" fill="none" stroke="#0a0a0a" stroke-width="1.8" stroke-linejoin="round" stroke-linecap="round"><path d="M2 4 H22 V22.5 H2 Z" fill="#0a0a0a" stroke="none"/><path d="M6 1.5 H18 V4 H6 Z" fill="#0a0a0a" stroke="none"/><g fill="#3e2b4a" stroke="none"><rect x="5" y="6.5" width="3" height="2.2"/><rect x="10.5" y="6.5" width="3" height="2.2"/><rect x="16" y="6.5" width="3" height="2.2"/><rect x="5" y="10.5" width="3" height="2.2"/><rect x="10.5" y="10.5" width="3" height="2.2"/><rect x="16" y="10.5" width="3" height="2.2"/><rect x="5" y="14.5" width="3" height="2.2"/><rect x="16" y="14.5" width="3" height="2.2"/><rect x="9.5" y="17" width="5" height="5.5"/></g></svg></div><div class="tl" style="color:#f4f4f4">Manager</div></div><div class="tile" style="left:346px;background:#3e2b4a"><div class="ti"><svg width="26" height="26" viewBox="0 0 24 24" style="display:block;" fill="none" stroke="#0a0a0a" stroke-width="1.8" stroke-linejoin="round" stroke-linecap="round"><path d="M4 2 H15 L20 7 V22 H4 Z"/><path d="M15 2 V7 H20"/><path d="M7 11 H12 M7 14 H10"/><path d="M9 19 L10 15.5 L19 6.5 L21.5 9 L12.5 18 Z" fill="#0a0a0a"/></svg></div><div class="tl" style="color:#f4f4f4">Exec Asst</div></div><div class="tile" style="left:428px;background:#3e2b4a"><div class="ti"><svg width="26" height="26" viewBox="0 0 24 24" style="display:block;" fill="none" stroke="#0a0a0a" stroke-width="1.8" stroke-linejoin="round" stroke-linecap="round"><path d="M12 3.5 V20"/><circle cx="12" cy="3" r="1.6" fill="#0a0a0a" stroke="none"/><path d="M3 6 H21"/><path d="M5 6 L1.5 13 H8.5 Z M19 6 L15.5 13 H22.5 Z" stroke-width="1.3"/><path d="M1.5 13 Q5 17 8.5 13 Z M15.5 13 Q19 17 22.5 13 Z" fill="#0a0a0a"/><path d="M6 22 H18 V20 H6 Z" fill="#0a0a0a"/><path d="M9 20 Q12 16 15 20" fill="#0a0a0a"/></svg></div><div class="tl" style="color:#f4f4f4">Legal</div></div></div>
<div class="a" style="left:20px;top:359px;width:1285px;height:29px;border-radius:6px;background:#0b131c;font-size:11px;line-height:30px;white-space:nowrap"><span class="a" style="left:489px;color:#1fb59a;letter-spacing:0.1px">20 Total Roles</span><span class="a" style="left:566px;color:#4a5866">•</span><span class="a" style="left:576px;color:#e8832e;letter-spacing:0.2px">4 Departments</span><span class="a" style="left:657px;color:#4a5866">•</span><span class="a" style="left:667px;color:#f2c41c;letter-spacing:0.15px">65+ Events</span><span class="a" style="left:729px;color:#4a5866">•</span><span class="a" style="left:739px;color:#a55fd0;letter-spacing:-0.1px">Full Access</span></div>
</div>
<div class="a kpi" style="left:21px;top:570px;width:261px;background:#fff"><div class="klab" style="color:#1b3a5c"><span class="kic"><svg width="12" height="12" viewBox="0 0 24 24" style="display:block;" fill="none" stroke="#1b3a5c" stroke-width="2.4" stroke-linejoin="round" stroke-linecap="round"><path d="M9.5 2 L12 4 L14.5 2 L14 5 H10 Z" stroke-width="1.5"/><path d="M10 5.5 Q3 9 3 15.5 Q3 22 12 22 Q21 22 21 15.5 Q21 9 14 5.5 Z" stroke-width="1.6"/><path d="M14 12 Q13.5 10.5 12 10.5 Q10 10.5 10 12.2 Q10 13.7 12 14 Q14 14.3 14 16 Q14 17.5 12 17.5 Q10.5 17.5 10 16 M12 9 V19" stroke-width="1.3"/></svg></span><span class="t">REVENUE</span></div><div class="kval" style="color:#22c15e">₹530,000</div><div class="ksub">Target: ₹5,000,000</div><div class="a" style="left:20px;top:78px;width:221px;height:8px;background:#e6f4ea"><div style="width:11px;height:8px;border-radius:4px;background:#2ecc71"></div></div><div class="a" style="left:20px;top:90px;font-size:9px;line-height:11px;color:#7a8896;white-space:nowrap"><span style="color:#22c15e">10.6%</span>&nbsp; achieved</div></div>
<div class="a kpi" style="left:288px;top:570px;width:261px;background:#fff"><div class="klab" style="color:#1b3a5c"><span class="kic"><svg width="12" height="12" viewBox="0 0 24 24" style="display:block;" fill="none" stroke="#1b3a5c" stroke-width="2.4" stroke-linejoin="round" stroke-linecap="round"><path d="M1 12.5 H23 L20.5 21.5 H3.5 Z" fill="#1b3a5c" stroke="none"/><path d="M4 12.5 V9 H9 V6.5 H14 V4 H19 V12.5 Z" fill="#1b3a5c" stroke="none"/><path d="M16 1.5 H19 V4 H16 Z" fill="#1b3a5c" stroke="none"/><g stroke="#fff" stroke-width="1.1" stroke-dasharray="1.6 1.6"><path d="M5 16 H19"/><path d="M5 19.5 H19"/><path d="M11 9.5 H17"/></g></svg></span><span class="t">SHIPMENTS</span></div><div class="kval" style="color:#1b3a5c">6 <span style="color:#7b8c9a">/ 50</span></div><div class="ksub">Active: <span style="color:#e8832e">6</span></div><div class="a" style="left:20px;top:78px;width:221px;height:8px;background:#e3f0fa"><div style="width:11px;height:8px;border-radius:4px;background:#1a9e85"></div></div><div class="a" style="left:20px;top:90px;font-size:9px;line-height:11px;color:#7a8896;white-space:nowrap"><span style="color:#1a9e85">12.0%</span>&nbsp; of target</div></div>
<div class="a kpi" style="left:553px;top:570px;width:261px;background:#fff"><div class="klab" style="color:#1b3a5c"><span class="kic"><svg width="12" height="12" viewBox="0 0 24 24" style="display:block;" fill="none" stroke="#1b3a5c" stroke-width="2.4" stroke-linejoin="round" stroke-linecap="round"><rect x="2" y="2" width="20" height="20" rx="3" stroke-width="2"/><path d="M4 7 H20 M4 12 H20 M4 17 H20" stroke-width="1.2"/><g fill="#1b3a5c" stroke="none"><circle cx="6" cy="7" r="1.4"/><circle cx="9" cy="7" r="1.4"/><circle cx="15" cy="7" r="1.4"/><circle cx="18" cy="7" r="1.4"/><circle cx="7" cy="12" r="1.4"/><circle cx="12" cy="12" r="1.4"/><circle cx="17" cy="12" r="1.4"/><circle cx="6" cy="17" r="1.4"/><circle cx="10" cy="17" r="1.4"/><circle cx="14" cy="17" r="1.4"/><circle cx="18" cy="17" r="1.4"/></g></svg></span><span class="t">PROFIT MARGIN</span></div><div class="kval" style="color:#1a9e85">30.9%</div><div class="ksub">Profit: <span style="color:#22c15e">₹164,000</span></div></div>
<div class="a kpi" style="left:818px;top:570px;width:261px;background:#fff"><div class="klab" style="color:#1b3a5c"><span class="kic"><svg width="12" height="12" viewBox="0 0 24 24" style="display:block;" fill="none" stroke="#1b3a5c" stroke-width="2.4" stroke-linejoin="round" stroke-linecap="round"><circle cx="12" cy="13.5" r="8"/><path d="M10 2.5 H14 M12 2.5 V5.5 M19 6 L20.5 4.5"/><path d="M12 13.5 L15 10" /><circle cx="9" cy="12" r="1.2" fill="#1b3a5c" stroke="none"/><circle cx="15" cy="12" r="1.2" fill="#1b3a5c" stroke="none"/></svg></span><span class="t">ON-TIME DELIVERY</span></div><div class="kval" style="color:#1a9e85">87.5%</div><div class="ksub">Satisfaction: <span style="color:#f2b818">4.3/5.0</span> &nbsp;⭑</div></div>
<div class="a kpi" style="left:1085px;top:570px;width:261px;background:#fef5ef"><div class="klab" style="color:#e0463a"><span class="kic"><svg width="12" height="12" viewBox="0 0 24 24" style="display:block;" fill="none" stroke="#e0463a" stroke-width="2.4" stroke-linejoin="round" stroke-linecap="round"><path d="M6 19 V13 Q6 7 12 7 Q18 7 18 13 V19 Z" fill="#e0463a" stroke="none"/><path d="M3 21 H21" stroke-width="3"/><path d="M12 1.5 V4.5 M4 4 L6.5 6.5 M20 4 L17.5 6.5" stroke-width="2"/><path d="M9.5 12 L11 10" stroke="#fff" stroke-width="1.2"/></svg></span><span class="t">EXCEPTIONS</span></div><div class="kval" style="top:40px;color:#e0463a">6</div><span class="a" style="left:38px;top:45px"><svg width="14" height="14" viewBox="0 0 14 14" style="display:block"><defs><pattern id="h1" width="2" height="2" patternUnits="userSpaceOnUse" patternTransform="rotate(45)"><rect width="2" height="2" fill="#9a9a9a"/><rect width="1" height="2" fill="#222"/></pattern></defs><circle cx="7" cy="7" r="6.2" fill="url(#h1)" stroke="#111" stroke-width="1.1"/></svg></span><div class="kval" style="top:40px;left:65px;color:#f2c41c">2</div><span class="a" style="left:80px;top:47px"><svg width="12" height="12" viewBox="0 0 12 12" style="display:block"><defs><pattern id="h2" width="2.2" height="2.2" patternUnits="userSpaceOnUse"><rect width="2.2" height="2.2" fill="#f0f0f0"/><rect width="0.7" height="2.2" fill="#555"/><rect width="2.2" height="0.7" fill="#555"/></pattern></defs><circle cx="6" cy="6" r="5.2" fill="url(#h2)" stroke="#111" stroke-width="1"/></svg></span><div class="ksub" style="top:69.5px">Overdue: <span style="color:#e0463a">3</span> &nbsp;| Pending: <span style="color:#e8832e">7</span></div></div>
<div class="a" style="left:21px;top:700px;width:1325px;height:39px;border-radius:9px;background:#fff;box-shadow:0 1px 4px rgba(20,40,60,0.05)"></div>
<div class="a tab act" style="left:25px;top:704px"><span class="tic" style="left:18.9px"><svg width="12" height="12" viewBox="0 0 24 24" style="display:block;" fill="none" stroke="#fff" stroke-width="2.4" stroke-linejoin="round" stroke-linecap="round"><circle cx="11" cy="13" r="9.5" fill="#fff" stroke="none"/><circle cx="11" cy="13" r="5.5" fill="none" stroke="#1d4b6d" stroke-width="1.6"/><circle cx="11" cy="13" r="1.8" fill="#1d4b6d" stroke="none"/><path d="M11 13 L20 4" stroke="#1d4b6d" stroke-width="2.6"/><path d="M11 13 L21 3" stroke="#fff" stroke-width="1.4"/><path d="M18 1 L19 4.5 L23 5.5 L21 3 Z" fill="#fff"/></svg></span><span class="tn" style="left:35.9px;width:31.6px;">Pulse</span></div>
<div class="a tab" style="left:114px;top:704px"><span class="tic" style="left:17.3px"><svg width="12" height="12" viewBox="0 0 24 24" style="display:block;" fill="none" stroke="#5f7482" stroke-width="2.4" stroke-linejoin="round" stroke-linecap="round"><path d="M9 2 L13.5 1 L16 10 L11.5 11 Z" fill="#5f7482" stroke="none"/><path d="M3 22 H21 M6 19 H13 M14 12.5 Q19.5 14 18.5 18.5 Q17.5 22 12 22"/><circle cx="12" cy="15" r="2.2"/></svg></span><span class="tn" style="left:34.3px;width:33.2px;">X-Ray</span></div>
<div class="a tab" style="left:202px;top:704px"><span class="tic" style="left:17.2px"><svg width="12" height="12" viewBox="0 0 24 24" style="display:block;" fill="none" stroke="#5f7482" stroke-width="2.4" stroke-linejoin="round" stroke-linecap="round"><path d="M1 12 C5.5 3, 18.5 3, 23 12 C18.5 21, 5.5 21, 1 12 Z"/><circle cx="12" cy="12" r="5"/><circle cx="12" cy="12" r="2.2" fill="#5f7482" stroke="none"/></svg></span><span class="tn" style="left:34.2px;width:33.3px;">Watch</span></div>
<div class="a tab" style="left:290px;top:704px"><span class="tic" style="left:14.6px"><svg width="12" height="12" viewBox="0 0 24 24" style="display:block;" fill="none" stroke="#5f7482" stroke-width="2.4" stroke-linejoin="round" stroke-linecap="round"><path d="M6 19 V13 Q6 7 12 7 Q18 7 18 13 V19 Z" fill="#5f7482" stroke="none"/><path d="M3 21 H21" stroke-width="3"/><path d="M12 1.5 V4.5 M4 4 L6.5 6.5 M20 4 L17.5 6.5" stroke-width="2"/><path d="M9.5 12 L11 10" stroke="#f4f6f9" stroke-width="1.2"/></svg></span><span class="tn" style="left:31.6px;width:35.9px;">Excepti</span></div>
<div class="a tab" style="left:378px;top:704px"><span class="tic" style="left:14.3px"><svg width="12" height="12" viewBox="0 0 24 24" style="display:block;" fill="none" stroke="#5f7482" stroke-width="2.4" stroke-linejoin="round" stroke-linecap="round"><rect x="2" y="2" width="20" height="20" rx="2" fill="#5f7482" stroke="none"/><g fill="#f4f6f9" stroke="none"><rect x="5" y="5" width="3.5" height="14"/><rect x="10.5" y="12" width="3" height="7"/><rect x="15.5" y="5" width="3.5" height="14"/></g></svg></span><span class="tn" style="left:31.3px;width:36.2px;">Reports</span></div>
<div class="a tab" style="left:466px;top:704px"><span class="tic" style="left:14.3px"><svg width="12" height="12" viewBox="0 0 24 24" style="display:block;" fill="none" stroke="#5f7482" stroke-width="2.4" stroke-linejoin="round" stroke-linecap="round"><circle cx="12" cy="10.5" r="9" fill="#5f7482" stroke="none"/><path d="M6 22 H18 L16 18 H8 Z" fill="#5f7482" stroke="none"/><circle cx="8.5" cy="8" r="2" fill="#f4f6f9" stroke="none"/></svg></span><span class="tn" style="left:31.3px;width:36.2px;">Insights</span></div>
<div class="a tab" style="left:554px;top:704px"><span class="tic" style="left:20.2px"><svg width="12" height="12" viewBox="0 0 24 24" style="display:block;" fill="none" stroke="#5f7482" stroke-width="2.4" stroke-linejoin="round" stroke-linecap="round"><path d="M5 2.5 H19 V17"/><path d="M7 2.5 V19 Q7 21.5 9.5 21.5 H21.5 Q19 21.5 19 19 V17"/><path d="M2.5 5 V2.5 H7"/><path d="M10 8 H16 M10 12 H16"/></svg></span><span class="tn" style="left:37.2px;width:30.3px;">Audit</span></div>
<div class="a tab" style="left:642px;top:704px"><span class="tic" style="left:18.3px"><svg width="12" height="12" viewBox="0 0 24 24" style="display:block;" fill="none" stroke="#5f7482" stroke-width="2.4" stroke-linejoin="round" stroke-linecap="round"><circle cx="12" cy="8" r="5.5" fill="#5f7482" stroke="none"/><path d="M2 22.5 Q3 14 12 14 Q21 14 22 22.5 Z" fill="#5f7482" stroke="none"/></svg></span><span class="tn" style="left:35.3px;width:32.2px;">Users</span></div>
<div class="a tab" style="left:730px;top:704px"><span class="tic" style="left:16.8px"><svg width="12" height="12" viewBox="0 0 24 24" style="display:block;" fill="none" stroke="#5f7482" stroke-width="2.4" stroke-linejoin="round" stroke-linecap="round"><path d="M2 2.5 H22 V12 H2 Z" fill="#5f7482" stroke="none"/><path d="M3 14 H21 V22 H3 Z" fill="#5f7482" stroke="none"/><path d="M6 17.5 H18" stroke="#f4f6f9" stroke-width="2"/></svg></span><span class="tn" style="left:33.8px;width:33.7px;">Health</span></div>
<div class="a tab" style="left:818px;top:704px"><span class="tic" style="left:27.9px"><svg width="12" height="12" viewBox="0 0 24 24" style="display:block;" fill="none" stroke="#5f7482" stroke-width="2.4" stroke-linejoin="round" stroke-linecap="round"><rect x="2" y="6" width="20" height="12" rx="2"/><path d="M5 10 H11 M5 14 H11"/><rect x="13.5" y="9" width="5" height="6" fill="#5f7482" stroke="none"/></svg></span><span class="tn" style="left:44.9px;width:22.6px;">IT</span></div>
<div class="a tab" style="left:906px;top:704px"><span class="tic" style="left:14.3px"><svg width="12" height="12" viewBox="0 0 24 24" style="display:block;" fill="none" stroke="#5f7482" stroke-width="2.4" stroke-linejoin="round" stroke-linecap="round"><path d="M2 22 V5 H6 V2 H18 V5 H22 V22 Z" fill="#5f7482" stroke="none"/><g fill="#f4f6f9" stroke="none"><rect x="4" y="8" width="2" height="2"/><rect x="8" y="8" width="2" height="2"/><rect x="14" y="8" width="2" height="2"/><rect x="18" y="8" width="2" height="2"/><rect x="4" y="12" width="2" height="2"/><rect x="8" y="12" width="2" height="2"/><rect x="14" y="12" width="2" height="2"/><rect x="18" y="12" width="2" height="2"/><rect x="4" y="16" width="2" height="2"/><rect x="18" y="16" width="2" height="2"/><rect x="10.5" y="17" width="3" height="5"/></g></svg></span><span class="tn" style="left:31.3px;width:36.2px;letter-spacing:-0.75px;">Tenants</span></div>
<div class="a tab" style="left:994px;top:704px"><span class="tic" style="left:14.3px"><svg width="12" height="12" viewBox="0 0 24 24" style="display:block;" fill="none" stroke="#5f7482" stroke-width="2.4" stroke-linejoin="round" stroke-linecap="round"><rect x="3" y="2" width="18" height="20" fill="#5f7482" stroke="none"/><g fill="#f4f6f9" stroke="none"><rect x="6" y="5" width="5" height="5"/><rect x="13" y="5" width="5" height="5"/><rect x="6" y="14" width="12" height="3"/></g></svg></span><span class="tn" style="left:31.3px;width:38.7px;">Branches</span></div>
<div class="a tab" style="left:1082px;top:704px"><span class="tic" style="left:14.3px"><svg width="12" height="12" viewBox="0 0 24 24" style="display:block;" fill="none" stroke="#5f7482" stroke-width="2.4" stroke-linejoin="round" stroke-linecap="round"><rect x="2" y="2" width="20" height="20" rx="2"/><path d="M8.5 2 V22 M15.5 2 V22 M2 8.5 H22 M2 15.5 H22"/><path d="M4 20 L20 4" stroke-width="1.2"/></svg></span><span class="tn" style="left:31.3px;width:36.2px;">Platform</span></div>
<div class="a tab" style="left:1170px;top:704px"><span class="tic" style="left:18.1px"><svg width="12" height="12" viewBox="0 0 24 24" style="display:block;" fill="none" stroke="#5f7482" stroke-width="2.4" stroke-linejoin="round" stroke-linecap="round"><path d="M4 2 H15 L20 7 V22 H4 Z"/><path d="M7 11 H12 M7 14 H10"/><path d="M9 19 L10 15.5 L19 6.5 L21.5 9 L12.5 18 Z" fill="#5f7482"/></svg></span><span class="tn" style="left:35.1px;width:32.4px;">Fields</span></div>
<div class="a tab" style="left:1259px;top:704px"><span class="tic" style="left:18.5px"><svg width="12" height="12" viewBox="0 0 24 24" style="display:block;" fill="none" stroke="#5f7482" stroke-width="2.4" stroke-linejoin="round" stroke-linecap="round"><path d="M2 11 L12 2.5 L22 11"/><path d="M4.5 9 V21 H19.5 V9"/><rect x="10" y="14" width="4" height="7" fill="#5f7482" stroke="none"/><path d="M5 3 V7"/><path d="M3 12 Q12 8 21 12" stroke-width="1"/></svg></span><span class="tn" style="left:35.5px;width:32.0px;">Office</span></div>
<div class="a" style="left:21px;top:751px;width:957px;height:80px;border-radius:12px;background:#fff;box-shadow:0 2px 6px rgba(20,40,60,0.08)">
<div class="a" style="left:20px;top:19px"><svg width="14" height="14" viewBox="0 0 24 24" style="display:block;" fill="none" stroke="#34475a" stroke-width="1.8" stroke-linejoin="round" stroke-linecap="round"><path d="M12 1.5 L21.5 6 V17.5 L12 22.5 L2.5 17.5 V6 Z"/><path d="M2.5 6 L12 11 L21.5 6 M12 11 V22.5"/><path d="M7 3.8 L16.5 8.5 V12"/></svg></div>
<div class="a" style="left:43px;top:18px;font-size:12.5px;letter-spacing:-0.2px;color:#3a4c5e;line-height:16px;white-space:nowrap">ALL SHIPMENTS — LIVE TRACKER</div>
<div class="a" style="left:33px;top:55px;font-size:12px;color:#223344;line-height:14px;white-space:nowrap">Shipment</div>
<div class="a" style="left:133px;top:55px;font-size:12px;color:#223344;line-height:14px;white-space:nowrap">Customer</div>
<div class="a" style="left:447px;top:55px;font-size:12px;color:#223344;line-height:14px;white-space:nowrap">Vendor</div>
<div class="a" style="left:547px;top:55px;font-size:12px;color:#223344;line-height:14px;white-space:nowrap">Route</div>
<div class="a" style="left:707px;top:55px;font-size:12px;color:#223344;line-height:14px;white-space:nowrap">Status</div>
<div class="a" style="left:807px;top:55px;font-size:12px;color:#223344;line-height:14px;white-space:nowrap">Progress</div>
<div class="a" style="left:897px;top:55px;font-size:12px;color:#223344;line-height:14px;white-space:nowrap">M</div>
</div>
<div class="a" style="left:986px;top:751px;width:360px;height:80px;border-radius:12px;background:#fff;box-shadow:0 2px 6px rgba(20,40,60,0.08)">
<div class="a" style="left:17px;top:17px"><svg width="16" height="16" viewBox="0 0 24 24" style="display:block;" fill="none" stroke="#34475a" stroke-width="1.8" stroke-linejoin="round" stroke-linecap="round"><path d="M5 17 V11 Q5 4 12 4 Q19 4 19 11 V17 L21 19 H3 Z"/><path d="M10 21.5 Q12 23 14 21.5"/><path d="M12 2 V4"/></svg></div>
<div class="a" style="left:43px;top:18px;font-size:12.5px;letter-spacing:-0.35px;color:#3a4c5e;line-height:16px;white-space:nowrap">LIVE FEED</div>
<div class="a" style="left:16px;top:41px;width:327px;height:40px;border-radius:7px;border:1px solid #e1e3e6;background:#fcfcfd">
<div class="a" style="left:9px;top:7px"><svg width="12" height="12" viewBox="0 0 24 24" style="display:block;" fill="none" stroke="#111" stroke-width="1.8" stroke-linejoin="round" stroke-linecap="round"><rect x="5" y="3" width="14" height="19" rx="1" fill="#111" stroke="none"/><path d="M9 6 L15 12 M15 6 L9 12" stroke="#fff" stroke-width="2"/></svg></div>
<div class="a" style="left:26px;top:8px;font-size:11.5px;color:#111;line-height:13px;white-space:nowrap">Medical Claim</div></div>
</div>
<div class="a" style="left:1366px;top:54px;width:17px;height:755px;background:#eef2f7"></div>
<div class="a" style="left:1366px;top:54px;width:17px;height:17px;background:#e3e6ea"><svg width="17" height="17" viewBox="0 0 17 17" style="display:block"><path d="M8.5 4.5 V13 M5 8 L8.5 4.5 L12 8" stroke="#b8bbbe" stroke-width="1.3" fill="none"/></svg></div>
<div class="a" style="left:1366px;top:71px;width:17px;height:446px;background:#bcc0c6"></div>
<div class="a" style="left:1366px;top:792px;width:17px;height:17px;background:#e3e6ea"><svg width="17" height="17" viewBox="0 0 17 17" style="display:block"><path d="M8.5 4 V12.5 M5 9 L8.5 12.5 L12 9" stroke="#b8bbbe" stroke-width="1.3" fill="none"/></svg></div>
</div>
<div class="a" style="left:1595px;top:0;width:4px;height:848px;background:linear-gradient(180deg,#02004e 0%,#0a024e 60%,#380a66 100%)"></div>
<div class="a" style="left:1596px;top:140px;width:8px;height:34px;border-radius:4px;background:#3b4bc8"></div>
<div class="a" style="left:0;top:847px;width:1599px;height:1px;background:#2e0a55"></div>
<div class="a" style="left:668px;top:847px;width:45px;height:1px;background:#d0306a"></div>
<div class="a" style="left:728px;top:847px;width:26px;height:1px;background:#d0306a"></div>
</body></html>
